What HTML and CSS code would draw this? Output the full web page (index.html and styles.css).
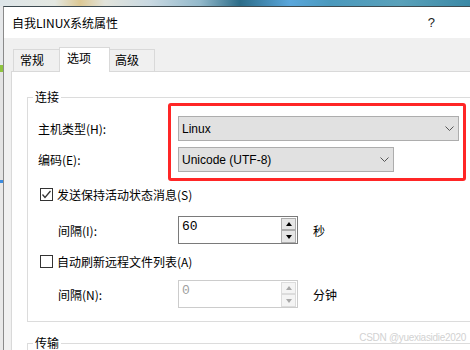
FILE: index.html
```html
<!DOCTYPE html>
<html lang="zh-CN">
<head>
    <meta charset="UTF-8">
    <title>自我LINUX系统属性</title>
    <link rel="stylesheet" href="styles.css">
</head>
<body>
<div class="desk-top"></div>
<div class="screen">
    <div class="desk-side"></div>
    <div class="window">
        <div class="titlebar">
            <span class="title">自我LINUX系统属性</span>
            <span class="help">?</span>
        </div>
        <div class="client">
            <div class="tabs">
                <div class="tab">常规</div>
                <div class="tab active">选项</div>
                <div class="tab last">高级</div>
            </div>
            <div class="panel">
                <fieldset class="group">
                    <legend>连接</legend>
                    <div class="conn">
                        <div class="conn-labels">
                            <div class="lbl">主机类型(H):</div>
                            <div class="lbl">编码(E):</div>
                        </div>
                        <div class="mark">
                            <div class="combo">
                                <span>Linux</span>
                                <svg class="chev" width="9" height="5" viewBox="0 0 9 5"><polyline points="0.5,0.5 4.5,4.5 8.5,0.5" fill="none" stroke="#555" stroke-width="1"/></svg>
                            </div>
                            <div class="combo short">
                                <span>Unicode (UTF-8)</span>
                                <svg class="chev" width="9" height="5" viewBox="0 0 9 5"><polyline points="0.5,0.5 4.5,4.5 8.5,0.5" fill="none" stroke="#555" stroke-width="1"/></svg>
                            </div>
                        </div>
                    </div>

                    <div class="check first">
                        <span class="box">
                            <svg width="11" height="11" viewBox="0 0 11 11"><polyline points="1.5,5.5 4,8.5 9.5,2" fill="none" stroke="#333" stroke-width="1.3"/></svg>
                        </span>
                        <span>发送保持活动状态消息(S)</span>
                    </div>
                    <div class="spin-row first">
                        <div class="spin-label">间隔(I):</div>
                        <div class="spin">
                            <span class="val">60</span>
                            <div class="arrows">
                                <span class="arr up"></span>
                                <span class="arr down"></span>
                            </div>
                        </div>
                        <span class="unit">秒</span>
                    </div>

                    <div class="check second">
                        <span class="box"></span>
                        <span>自动刷新远程文件列表(A)</span>
                    </div>
                    <div class="spin-row second">
                        <div class="spin-label">间隔(N):</div>
                        <div class="spin off">
                            <span class="val">0</span>
                            <div class="arrows">
                                <span class="arr up"></span>
                                <span class="arr down"></span>
                            </div>
                        </div>
                        <span class="unit">分钟</span>
                    </div>
                </fieldset>

                <fieldset class="group next">
                    <legend>传输</legend>
                    <div class="filler"></div>
                </fieldset>
            </div>
        </div>
    </div>
</div>
<div class="watermark">CSDN @yuexiasidie2020</div>
</body>
</html>
```

FILE: styles.css
```css
* {
    margin: 0;
    padding: 0;
    box-sizing: border-box;
}
body {
    width: 470px;
    height: 350px;
    overflow: hidden;
    position: relative;
    background: #f0f0f0;
    font-family: "Noto Sans CJK SC", "Noto Sans", sans-serif;
    font-size: 12px;
    color: #000;
}

/* 背后的桌面 */
.desk-top {
    height: 6px;
    background: linear-gradient(90deg, #dde5e9 0, #e4e8e2 55px, #dcc894 80px, #e2e4dc 105px, #c9d9e2 150px, #93b9cb 200px, #2c6c88 240px, #5aa7dc 290px, #4b99bd 330px, #5aa1ba 400px, #3b89a6 470px);
}
.screen {
    display: flex;
}
.desk-side {
    width: 3px;
    flex: 0 0 3px;
    background: linear-gradient(180deg, #e6e8ea 0, #e6e8ea 59px, #8fc43e 59px, #8fc43e 66px, #e3e3e3 66px, #e3e3e3 174px, #3c8ce0 174px, #3c8ce0 177px, #e8e8e8 177px);
}

/* 对话框 */
.window {
    width: 467px;
    flex: 0 0 467px;
    height: 344px;
    overflow: hidden;
    border-top: 1px solid #3d4a50;
    border-left: 1px solid #8a8a8a;
    background: #f0f0f0;
}
.titlebar {
    height: 31px;
    background: #fff;
    display: flex;
    align-items: center;
    padding-left: 8px;
    font-size: 12px;
}
.titlebar .help {
    margin-left: auto;
    margin-right: 35px;
    font-family: "Liberation Sans", sans-serif;
    font-size: 13px;
    color: #222;
}
.client {
    padding-left: 7px;
}

/* 选项卡 */
.tabs {
    height: 33px;
    display: flex;
    align-items: flex-end;
    padding-left: 2px;
}
.tab {
    position: relative;
    width: 48px;
    height: 22px;
    padding-left: 6px;
    line-height: 20px;
    border: 1px solid #d9d9d9;
    border-bottom: none;
    background: #f0f0f0;
}
.tab.active {
    width: 51px;
    height: 25px;
    margin: 0 -2px -1px;
    padding-left: 7px;
    background: #fff;
    z-index: 2;
}
.tab.last {
    width: 47px;
}
.panel {
    border-top: 1px solid #d9d9d9;
    border-left: 1px solid #d9d9d9;
    background: #fff;
    height: 279px;
    overflow: hidden;
    padding: 18px 0 0 15px;
}

/* 分组框 */
.group {
    width: 460px;
    border: 1px solid #dcdcdc;
    padding: 0 0 13px;
    min-width: 0;
}
.group legend {
    margin-left: 5px;
    padding: 0 2px;
    line-height: 14px;
}
.group.next {
    margin-top: 14px;
}
.filler {
    height: 20px;
}

.conn {
    display: flex;
    margin-top: -1px;
}
.conn-labels {
    width: 140px;
    padding: 13px 0 0 10px;
    display: flex;
    flex-direction: column;
    gap: 6px;
}
.conn-labels .lbl {
    height: 25px;
    line-height: 25px;
}
.mark {
    width: 298px;
    border: 3px solid #ff2626;
    border-radius: 3px;
    padding: 10px 4px 6px 7px;
    display: flex;
    flex-direction: column;
    gap: 6px;
}
.combo {
    height: 25px;
    border: 1px solid #adadad;
    background: #e1e1e1;
    display: flex;
    align-items: center;
    justify-content: space-between;
    padding-left: 3px;
    font-family: "Liberation Sans", sans-serif;
    font-size: 12px;
}
.combo.short {
    width: 216px;
}
.combo .chev {
    margin-right: 4px;
}

/* 复选框 */
.check {
    height: 18px;
    display: flex;
    align-items: center;
    padding-left: 12px;
}
.check.first {
    margin-top: 4px;
}
.check.second {
    margin-top: 8px;
}
.check .box {
    width: 13px;
    height: 13px;
    border: 1px solid #333;
    background: #fff;
    margin-right: 4px;
    display: flex;
    align-items: center;
    justify-content: center;
}

/* 数值框 */
.spin-row {
    height: 28px;
    display: flex;
    align-items: center;
    padding-left: 30px;
}
.spin-row.first {
    margin-top: 13px;
}
.spin-row.second {
    margin-top: 10px;
}
.spin-label {
    width: 120px;
}
.spin {
    width: 120px;
    height: 28px;
    border: 1px solid #7a7a7a;
    background: #fff;
    display: flex;
    justify-content: space-between;
}
.spin .val {
    padding: 3px 0 0 3px;
    line-height: 14px;
    font-family: "Liberation Mono", monospace;
    font-size: 13px;
}
.spin .arrows {
    width: 15px;
    margin: 1px 1px 0 0;
    display: flex;
    flex-direction: column;
}
.spin .arr {
    height: 12px;
    border: 1px solid #adadad;
    background: #e6e6e6;
    display: flex;
    align-items: center;
    justify-content: center;
}
.spin .arr.down {
    height: 13px;
}
.spin .arr::after {
    content: "";
    border-left: 3px solid transparent;
    border-right: 3px solid transparent;
}
.spin .arr.up::after {
    border-bottom: 4px solid #000;
}
.spin .arr.down::after {
    border-top: 4px solid #000;
}
.spin.off {
    border-color: #cccccc;
}
.spin.off .val {
    color: #a0a0a0;
}
.spin.off .arr {
    border-color: #dcdcdc;
    background: #f4f4f4;
}
.spin.off .arr.up::after {
    border-bottom-color: #a8a8a8;
}
.spin.off .arr.down::after {
    border-top-color: #a8a8a8;
}
.unit {
    margin-left: 15px;
}

/* 水印 */
.watermark {
    position: absolute;
    right: 4px;
    top: 332px;
    font-family: "Liberation Sans", sans-serif;
    font-size: 10px;
    letter-spacing: -0.3px;
    color: #d2d2d2;
}
```
